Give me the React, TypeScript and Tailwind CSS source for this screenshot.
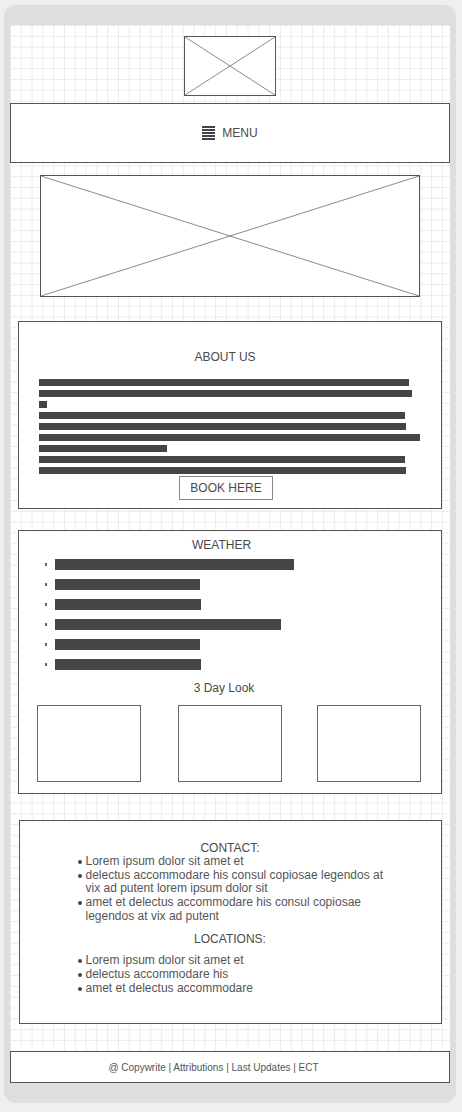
import React from 'react';

const aboutBars = [370, 373, 8, 366, 367, 381, 128, 366, 367];
const weatherBars = [239, 145, 146, 226, 145, 146];

const contactItems = [
  'Lorem ipsum dolor sit amet et',
  'delectus accommodare his consul copiosae legendos at vix ad putent lorem ipsum dolor sit',
  'amet et delectus accommodare his consul copiosae legendos at vix ad putent',
];

const locationItems = ['Lorem ipsum dolor sit amet et', 'delectus accommodare his', 'amet et delectus accommodare'];

// placeholder de imagen con la X típica del wireframe
const ImagePlaceholder: React.FC<{ className: string }> = ({ className }) => (
  <div className={`relative border border-[#555] bg-white ${className}`}>
    <svg className="absolute inset-0 h-full w-full" preserveAspectRatio="none" viewBox="0 0 100 100">
      <line x1="0" y1="0" x2="100" y2="100" stroke="#8a8a8a" strokeWidth="1" vectorEffect="non-scaling-stroke" />
      <line x1="100" y1="0" x2="0" y2="100" stroke="#8a8a8a" strokeWidth="1" vectorEffect="non-scaling-stroke" />
    </svg>
  </div>
);

const BulletList: React.FC<{ items: string[] }> = ({ items }) => (
  <ul className="pl-[58px] text-[12px] leading-[13.65px] text-[#555]">
    {items.map((item) => (
      <li key={item} className="flex items-start">
        <span className="mt-[5px] mr-[4px] h-[4px] w-[4px] shrink-0 rounded-full bg-[#444]"></span>
        <span className="w-[310px]">{item}</span>
      </li>
    ))}
  </ul>
);

const App: React.FC = () => {
  return (
    <div className="h-[1112px] bg-[#efefef] pt-[5px] pr-[6px] pl-[4px] font-['Liberation_Sans',Arial,sans-serif]">
      <div className="rounded-[12px] bg-[#dedede] px-[6px] py-[20px]">
        {/* Lienzo con cuadrícula */}
        <div className="flex h-[1058px] flex-col items-center bg-white bg-[linear-gradient(to_right,#ebebeb_1px,transparent_1px),linear-gradient(to_bottom,#ebebeb_1px,transparent_1px)] [background-size:10.8px_10.8px]">
          {/* Logo */}
          <ImagePlaceholder className="mt-[11px] h-[60px] w-[92px] shrink-0" />

          {/* Menu */}
          <div className="mt-[7px] flex h-[60px] w-full shrink-0 items-center justify-center border border-[#555] bg-white">
            <div className="flex flex-col gap-[1px]">
              <span className="h-[2px] w-[13px] bg-[#444]"></span>
              <span className="h-[2px] w-[13px] bg-[#444]"></span>
              <span className="h-[2px] w-[13px] bg-[#444]"></span>
              <span className="h-[2px] w-[13px] bg-[#444]"></span>
              <span className="h-[2px] w-[13px] bg-[#444]"></span>
            </div>
            <span className="ml-[7px] text-[12px] leading-[14px] text-[#4a4a4a]">MENU</span>
          </div>

          {/* Imagen principal */}
          <ImagePlaceholder className="mt-[12px] h-[122px] w-[380px] shrink-0" />

          {/* About us */}
          <div className="mt-[24px] flex h-[188px] w-[424px] shrink-0 flex-col border border-[#555] bg-white pt-[28px]">
            <p className="pr-[10px] text-center text-[12px] leading-[14px] text-[#4a4a4a]">ABOUT US</p>
            <div className="mt-[15px] flex flex-col gap-[4px] pl-[20px]">
              {aboutBars.map((w, i) => (
                <div key={i} className="h-[7px] bg-[#454545]" style={{ width: w }}></div>
              ))}
            </div>
            <button className="mt-[2px] ml-[160px] flex h-[24px] w-[94px] items-center justify-center border border-[#888] bg-white text-[12px] text-[#4a4a4a]">
              BOOK HERE
            </button>
          </div>

          {/* Weather */}
          <div className="mt-[21px] flex h-[264px] w-[424px] shrink-0 flex-col border border-[#555] bg-white pt-[7px]">
            <p className="pr-[17px] text-center text-[12px] leading-[14px] text-[#4a4a4a]">WEATHER</p>
            <div className="mt-[7px] flex flex-col gap-[9px] pl-[26px]">
              {weatherBars.map((w, i) => (
                <div key={i} className="flex h-[11px] items-center">
                  <span className="h-[3px] w-[2px] bg-[#666]"></span>
                  <div className="ml-[8px] h-[11px] bg-[#454545]" style={{ width: w }}></div>
                </div>
              ))}
            </div>
            <p className="mt-[11px] pr-[12px] text-center text-[12px] leading-[14px] text-[#4a4a4a]">3 Day Look</p>
            <div className="mt-[10px] flex pl-[18px]">
              <div className="h-[77px] w-[104px] border border-[#666]"></div>
              <div className="ml-[37px] h-[77px] w-[104px] border border-[#666]"></div>
              <div className="ml-[35px] h-[77px] w-[104px] border border-[#666]"></div>
            </div>
          </div>

          {/* Contact */}
          <div className="mt-[26px] flex h-[204px] w-[423px] shrink-0 flex-col border border-[#555] bg-white pt-[20px]">
            <p className="text-center text-[12px] leading-[14px] text-[#4a4a4a]">CONTACT:</p>
            <BulletList items={contactItems} />
            <p className="mt-[9px] text-center text-[12px] leading-[14px] text-[#4a4a4a]">LOCATIONS:</p>
            <div className="mt-[8px]">
              <BulletList items={locationItems} />
            </div>
          </div>

          {/* Footer */}
          <div className="mt-[27px] flex h-[32px] w-full shrink-0 items-center justify-center border border-[#555] bg-white pr-[33px] text-[10px] text-[#555]">
            @ Copywrite | Attributions | Last Updates | ECT
          </div>
        </div>
      </div>
    </div>
  );
};

export default App;
